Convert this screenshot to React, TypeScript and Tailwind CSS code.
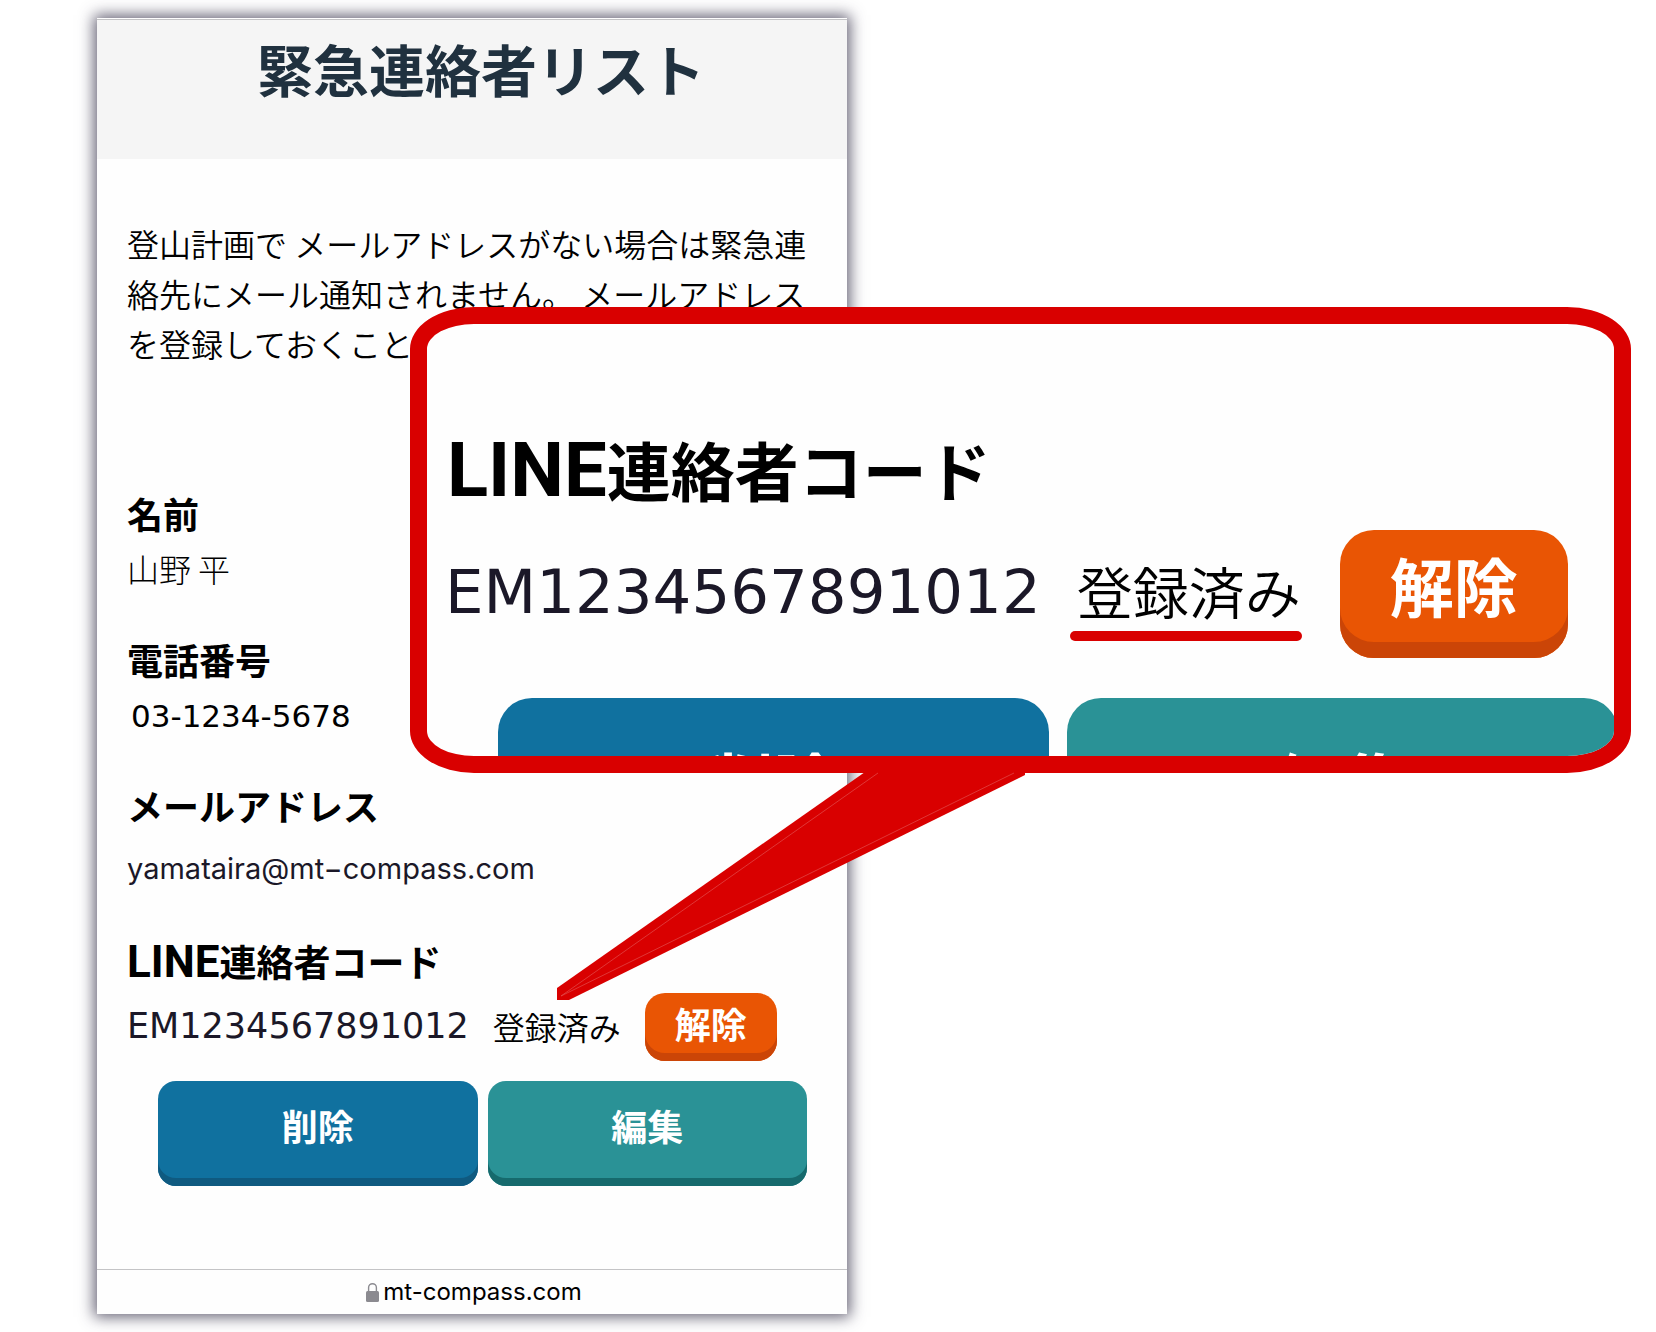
import React from 'react'

const ja = "font-['Noto_Sans_CJK_JP',sans-serif]"
const verdana = "font-['DejaVu_Sans','Noto_Sans_CJK_JP',sans-serif]"

const LockIcon = () => (
  <svg viewBox="0 0 13 19" className="w-[13px] h-[19px]" aria-hidden="true">
    <path d="M2.6 9V4.6a3.9 3.9 0 0 1 7.8 0V9" fill="none" stroke="#8b8a90" strokeWidth="1.4" />
    <rect x="0" y="8" width="13" height="11" rx="1.5" fill="#8b8a90" />
  </svg>
)

const ContactList = () => {
  return (
    <main className="w-full max-w-[750px] bg-[#fefefe] pt-px shadow-[0_0_14px_3px_rgba(50,45,70,0.75)]">
      <header className="border-t border-[#c4c4c6] bg-[#f5f5f5] pt-5 pb-[63px] pl-[18px]">
        <h1 className="text-center text-[56px] leading-[56px] font-bold text-[#20313f]">緊急連絡者リスト</h1>
      </header>

      <section className="pl-[30px] pr-10">
        <p className="pt-[59px] text-[32px] leading-[50px] font-[350]">
          登山計画で メールアドレスがない場合は緊急連
          <br />
          絡先にメール通知されません。 メールアドレス
          <br />
          を登録しておくこと
        </p>

        <dl className="mt-[120px] flex flex-col gap-9">
          <div>
            <dt className="text-[36px] leading-[50px] font-bold">名前</dt>
            <dd className="text-[32px] leading-[60px] font-light">山野 平</dd>
          </div>
          <div>
            <dt className="text-[36px] leading-[50px] font-bold">電話番号</dt>
            <dd className={`pt-1 pl-1 text-[31px] leading-[56px] ${verdana}`}>03-1234-5678</dd>
          </div>
          <div>
            <dt className="text-[36px] leading-[50px] font-bold">メールアドレス</dt>
            <dd className="pt-2 text-[29px] leading-[62px] text-[#1b1828] font-['Inter',sans-serif]">
              yamataira@mt−compass.com
            </dd>
          </div>
          <div>
            <dt className="text-[37px] leading-[50px] font-bold whitespace-nowrap">
              <span className="text-[44px] font-['Roboto',sans-serif]">LINE</span>連絡者コード
            </dt>
            <dd className="mt-[6px] flex items-center">
              <span className={`pb-[2px] text-[35px] text-[#1b1828] ${verdana}`}>EM1234567891012</span>
              <span className="ml-6 pb-[2px] text-[32px] font-[350] whitespace-nowrap">登録済み</span>
              <button className="ml-6 h-[68px] w-[132px] rounded-[20px] bg-[#e95504] pb-[9px] text-[36px] leading-[36px] font-bold text-white shadow-[inset_0_-8px_0_#cb4507]">
                解除
              </button>
            </dd>
          </div>
        </dl>

        <div className="mt-5 flex gap-[10px] pl-[31px]">
          <button className="h-[105px] flex-1 rounded-[18px] bg-[#10719f] pb-[18px] text-[36px] leading-[36px] font-bold text-white shadow-[inset_0_-8px_0_#0f5a80]">
            削除
          </button>
          <button className="h-[105px] flex-1 rounded-[18px] bg-[#2a9296] pb-[18px] text-[36px] leading-[36px] font-bold text-white shadow-[inset_0_-8px_0_#166a6d]">
            編集
          </button>
        </div>
      </section>

      <footer className="mt-[83px] flex h-[45px] items-center justify-center gap-1 border-t border-[#c4c4c6] pl-1">
        <LockIcon />
        <a href="#" className="text-2xl font-['Inter',sans-serif]">mt-compass.com</a>
      </footer>
    </main>
  )
}

// enlarged view of the LINE code row, floats over the list
const Callout = () => {
  return (
    <aside className="absolute top-[307px] right-[25px] left-[410px]">
      <div className="h-[466px] overflow-hidden rounded-[64px/42px] border-[17px] border-[#d90000] bg-[#fefefe]">
        <h2 className="mt-24 pl-5 text-[64px] leading-[96px] font-bold whitespace-nowrap">
          <span className="text-[76px] font-['Roboto',sans-serif]">LINE</span>連絡者コード
        </h2>
        <div className="mt-3 flex items-center pl-[18px]">
          <span className={`pb-1 text-[61px] text-[#1b1828] ${verdana}`}>EM1234567891012</span>
          <span className="ml-7 border-b-8 border-transparent px-2 text-[56px] leading-[90px] font-[350] whitespace-nowrap">
            登録済み
          </span>
          <button className="ml-[31px] h-32 w-[228px] rounded-[34px] bg-[#e95504] pb-5 text-[64px] leading-[64px] font-bold text-white shadow-[inset_0_-16px_0_#cb4507]">
            解除
          </button>
        </div>
        <div className="mt-10 -mr-1 flex gap-[18px] pl-[71px]">
          <button className="h-[186px] flex-1 rounded-[34px] bg-[#10719f] pb-6 text-[64px] leading-[64px] font-bold text-white">
            削除
          </button>
          <button className="h-[186px] flex-1 rounded-[34px] bg-[#2a9296] pb-6 text-[64px] leading-[64px] font-bold text-white">
            編集
          </button>
        </div>
      </div>
      <div className="absolute top-[324px] left-[660px] h-[10px] w-[232px] rounded-full bg-[#d90000]" />
      <svg viewBox="0 0 468 228" className="absolute top-[465px] left-[147px] h-[228px] w-[468px]" aria-hidden="true">
        <path d="M308 0L0 216V228H12L468 3V0Z" fill="#d90000" />
        <path d="M321 1L4 224L457 1" fill="none" stroke="#e45a5a" strokeWidth="0.6" />
      </svg>
    </aside>
  )
}

const App = () => {
  return (
    <div className={`relative min-h-screen bg-white pt-[18px] pl-[97px] text-black ${ja}`} lang="ja">
      <ContactList />
      <Callout />
    </div>
  )
}

export default App
